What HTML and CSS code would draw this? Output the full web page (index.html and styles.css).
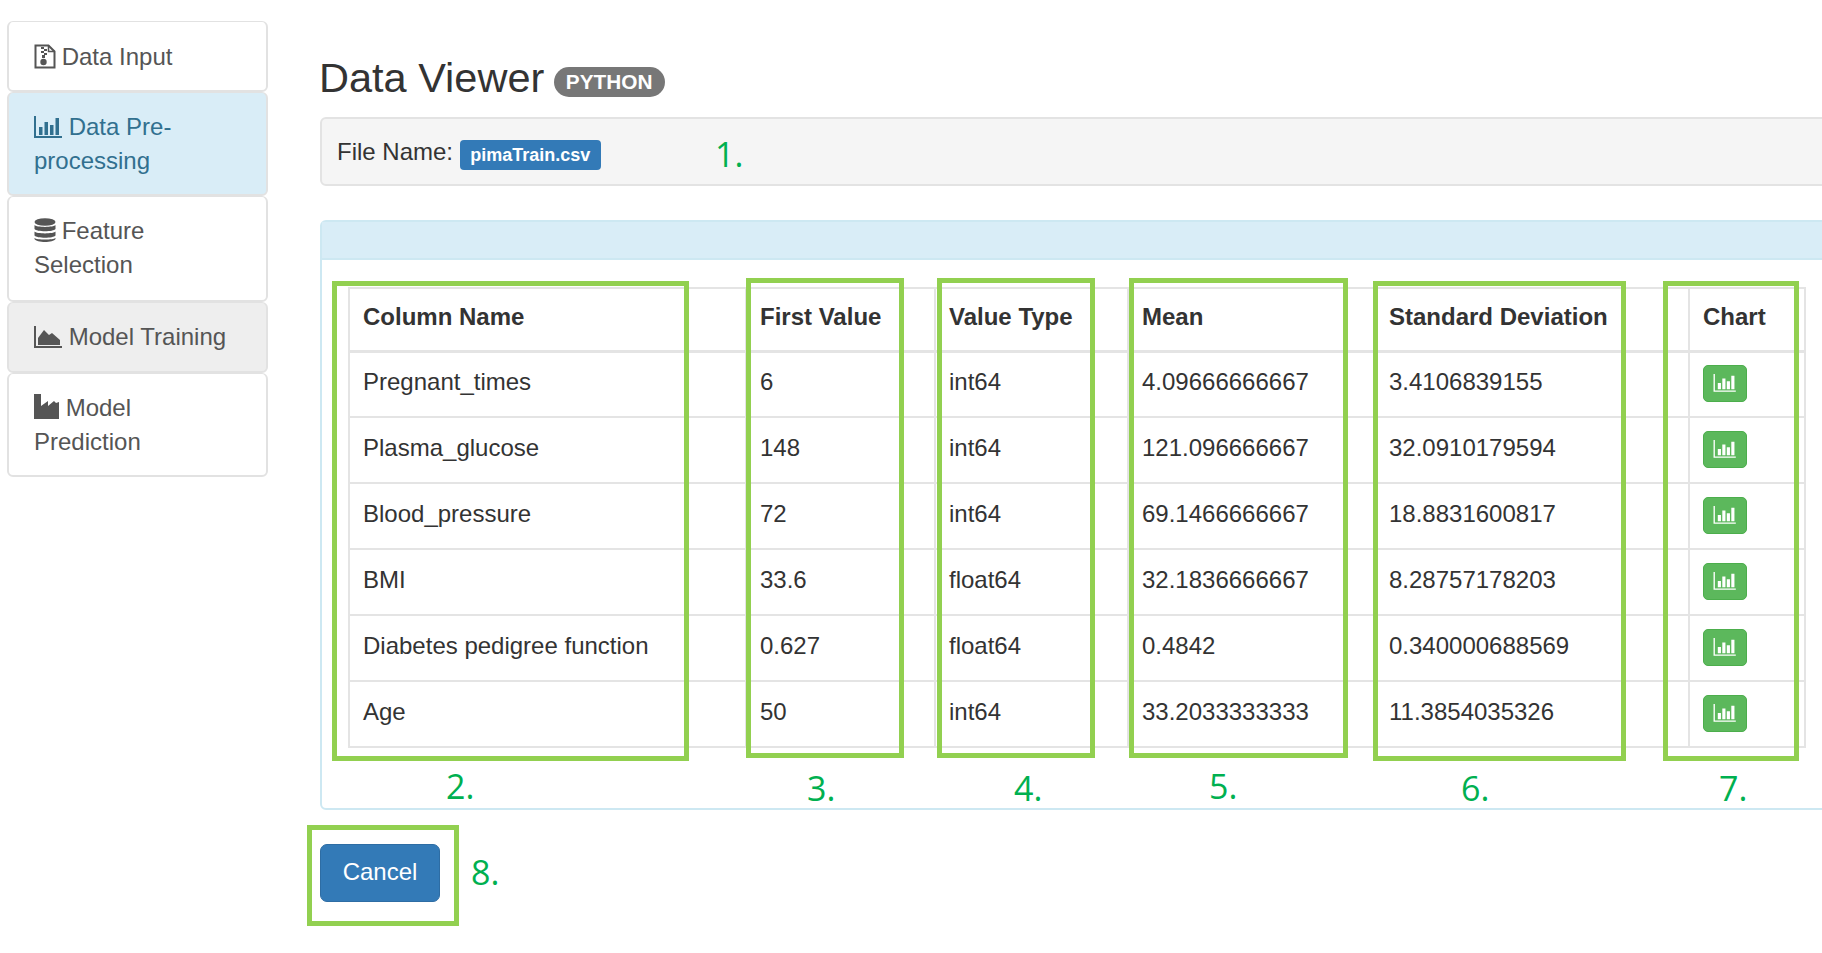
FILE: index.html
```html
<!DOCTYPE html>
<html lang="en">
<head>
  <meta charset="UTF-8" />
  <title>Data Viewer</title>
  <link rel="stylesheet" href="styles.css">
</head>
<body>

  <div class="page">

    <!-- Side Menu -->
    <nav class="menu">
      <a class="menu-item">
        <svg class="ico ico-tight" viewBox="0 0 22 25" width="22" height="25"><path d="M1.500 1.500h13l6 6v16h-19z" fill="none" stroke="#555" stroke-width="2"/><path d="M14.500 1.500v6h6" fill="none" stroke="#555" stroke-width="1.500"/><path d="M7 3h3v2h-3zM10 5h3v2h-3zM7 7h3v2h-3zM10 9h3v2h-3zM8 11h3v3h-3z" fill="#555"/><circle cx="9.500" cy="18" r="3.200" fill="#555"/></svg>
        Data Input
      </a>
      <a class="menu-item active">
        <svg class="ico" viewBox="0 0 28 22" width="28" height="22"><path d="M1 0v21h27" fill="none" stroke="currentColor" stroke-width="2"/><path d="M5 11h3.500v8h-3.500zM10.500 6h3.500v13h-3.500zM16 9h3.500v10h-3.500zM21.500 2h3.500v17h-3.500z" fill="currentColor"/></svg>
        Data Pre-processing
      </a>
      <a class="menu-item tall">
        <svg class="ico ico-tight" viewBox="0 0 22 25" width="22" height="25"><ellipse cx="11" cy="4" rx="10.500" ry="3.800" fill="#555"/><path d="M.5 7c2 2.500 19 2.500 21 0v4c-2 3-19 3-21 0zM.5 13.500c2 2.500 19 2.500 21 0v4c-2 3-19 3-21 0zM.5 20c2 2 19 2 21 0v1c-2 4-19 4-21 0z" fill="#555"/></svg>
        Feature Selection
      </a>
      <a class="menu-item hover">
        <svg class="ico" viewBox="0 0 28 22" width="28" height="22"><path d="M1 0v21h27" fill="none" stroke="#555" stroke-width="2"/><path d="M4 19v-7l6-8 5 5 3-2 8 7v5z" fill="#555"/></svg>
        Model Training
      </a>
      <a class="menu-item">
        <svg class="ico" viewBox="0 0 25 25" width="25" height="25"><path d="M0 0h7v12l7-5v5l6-5 2 2 3-1v17h-25z" fill="#555"/></svg>
        Model Prediction
      </a>
    </nav>

    <!-- Main Content -->
    <main class="content">
      <h2 class="title">Data Viewer <span class="pill">PYTHON</span></h2>

      <div class="well">File Name: <span class="tag">pimaTrain.csv</span></div>

      <div class="panel">
        <div class="panel-head"></div>
        <div class="panel-body">
          <table class="grid">
            <colgroup>
              <col class="c1"><col class="c2"><col class="c3"><col class="c4"><col class="c5"><col class="c6">
            </colgroup>
            <thead>
              <tr><th>Column Name</th><th>First Value</th><th>Value Type</th><th>Mean</th><th>Standard Deviation</th><th>Chart</th></tr>
            </thead>
            <tbody>
              <tr><td>Pregnant_times</td><td>6</td><td>int64</td><td>4.09666666667</td><td>3.4106839155</td><td><button class="chart-btn"><svg viewBox="0 0 26 20" width="24" height="18"><path d="M1 0v19h24" fill="none" stroke="#fff" stroke-width="1.500"/><path d="M5 10h3.500v7h-3.500zM10 5h3.500v12h-3.500zM15 8h3.500v9h-3.500zM20 2h3.500v15h-3.500z" fill="#fff"/></svg></button></td></tr>
              <tr><td>Plasma_glucose</td><td>148</td><td>int64</td><td>121.096666667</td><td>32.0910179594</td><td><button class="chart-btn"><svg viewBox="0 0 26 20" width="24" height="18"><path d="M1 0v19h24" fill="none" stroke="#fff" stroke-width="1.500"/><path d="M5 10h3.500v7h-3.500zM10 5h3.500v12h-3.500zM15 8h3.500v9h-3.500zM20 2h3.500v15h-3.500z" fill="#fff"/></svg></button></td></tr>
              <tr><td>Blood_pressure</td><td>72</td><td>int64</td><td>69.1466666667</td><td>18.8831600817</td><td><button class="chart-btn"><svg viewBox="0 0 26 20" width="24" height="18"><path d="M1 0v19h24" fill="none" stroke="#fff" stroke-width="1.500"/><path d="M5 10h3.500v7h-3.500zM10 5h3.500v12h-3.500zM15 8h3.500v9h-3.500zM20 2h3.500v15h-3.500z" fill="#fff"/></svg></button></td></tr>
              <tr><td>BMI</td><td>33.6</td><td>float64</td><td>32.1836666667</td><td>8.28757178203</td><td><button class="chart-btn"><svg viewBox="0 0 26 20" width="24" height="18"><path d="M1 0v19h24" fill="none" stroke="#fff" stroke-width="1.500"/><path d="M5 10h3.500v7h-3.500zM10 5h3.500v12h-3.500zM15 8h3.500v9h-3.500zM20 2h3.500v15h-3.500z" fill="#fff"/></svg></button></td></tr>
              <tr><td>Diabetes pedigree function</td><td>0.627</td><td>float64</td><td>0.4842</td><td>0.340000688569</td><td><button class="chart-btn"><svg viewBox="0 0 26 20" width="24" height="18"><path d="M1 0v19h24" fill="none" stroke="#fff" stroke-width="1.500"/><path d="M5 10h3.500v7h-3.500zM10 5h3.500v12h-3.500zM15 8h3.500v9h-3.500zM20 2h3.500v15h-3.500z" fill="#fff"/></svg></button></td></tr>
              <tr><td>Age</td><td>50</td><td>int64</td><td>33.2033333333</td><td>11.3854035326</td><td><button class="chart-btn"><svg viewBox="0 0 26 20" width="24" height="18"><path d="M1 0v19h24" fill="none" stroke="#fff" stroke-width="1.500"/><path d="M5 10h3.500v7h-3.500zM10 5h3.500v12h-3.500zM15 8h3.500v9h-3.500zM20 2h3.500v15h-3.500z" fill="#fff"/></svg></button></td></tr>
            </tbody>
          </table>
        </div>
      </div>

      <button class="cancel">Cancel</button>
    </main>
  </div>

  <!-- Annotations drawn over the screenshot -->
  <div class="box b2"></div>
  <div class="box b3"></div>
  <div class="box b4"></div>
  <div class="box b5"></div>
  <div class="box b6"></div>
  <div class="box b7"></div>
  <div class="box b8"></div>

  <span class="num n1">1.</span>
  <span class="num n2">2.</span>
  <span class="num n3">3.</span>
  <span class="num n4">4.</span>
  <span class="num n5">5.</span>
  <span class="num n6">6.</span>
  <span class="num n7">7.</span>
  <span class="num n8">8.</span>

</body>
</html>
```

FILE: styles.css
```css
html, body {
  margin: 0;
  padding: 0;
  width: 1822px;
  height: 953px;
  overflow: hidden;
  background-color: #fff;
}

body {
  position: relative;
  font-family: "Liberation Sans", Arial, sans-serif;
  font-size: 24px;
  color: #333;
}

.page {
  display: flex;
  align-items: flex-start;
  padding: 21px 0 0 7px;
  width: 1815px;
  overflow: hidden;
}

/* Side Menu */
.menu {
  width: 261px;
  flex: none;
  display: flex;
  flex-direction: column;
}

.menu-item {
  box-sizing: border-box;
  height: 71px;
  padding: 17px 25px 0;
  line-height: 33.500px;
  border: 2px solid #e2e2e2;
  border-top-width: 1px;
  border-radius: 6px;
  background-color: #fff;
  color: #555;
}

.menu-item:first-child {
  padding-top: 18px;
}

.menu-item:nth-child(2),
.menu-item:nth-child(5) {
  height: 104px;
}

.menu-item.tall {
  height: 106px;
}

.menu-item.active {
  background-color: #d9edf7;
  color: #31708f;
}

.menu-item.hover {
  background-color: #eee;
}

.ico {
  vertical-align: -3px;
}

.ico-tight {
  margin-right: -1px;
  vertical-align: -4px;
}

/* Main Content */
.content {
  flex: none;
  width: 1600px;
  margin-left: 52px;
  padding-top: 33px;
}

.title {
  margin: 0 0 15px;
  font-size: 41.500px;
  font-weight: normal;
  line-height: 48px;
  margin-left: -1px;
}

.pill {
  display: inline-block;
  vertical-align: 3px;
  padding: 0 12px;
  margin-left: -2px;
  font-size: 20.800px;
  font-weight: bold;
  line-height: 30px;
  color: #fff;
  background-color: #777;
  border-radius: 16px;
}

.well {
  box-sizing: border-box;
  height: 69px;
  padding: 17px 15px 0;
  line-height: 32px;
  background-color: #f5f5f5;
  border: 2px solid #e3e3e3;
  border-radius: 6px;
  margin-bottom: 34px;
}

.tag {
  display: inline-block;
  vertical-align: -1px;
  padding: 0 10.500px;
  font-size: 18px;
  font-weight: bold;
  line-height: 30px;
  color: #fff;
  background-color: #337ab7;
  border-radius: 4px;
}

.panel {
  box-sizing: border-box;
  height: 590px;
  border: 2px solid #cde8f2;
  border-radius: 6px;
  margin-bottom: 34px;
}

.panel-head {
  height: 36px;
  background-color: #d9edf7;
  border-bottom: 2px solid #cde8f2;
}

.panel-body {
  padding: 27px 0 0 26px;
}

.grid {
  border-collapse: collapse;
  table-layout: fixed;
  width: 1456px;
}

.c1 { width: 397px; }
.c2 { width: 189px; }
.c3 { width: 193px; }
.c4 { width: 247px; }
.c5 { width: 314px; }
.c6 { width: 116px; }

.grid th,
.grid td {
  height: 66px;
  padding: 0 13px 4px;
  text-align: left;
  white-space: nowrap;
  border: 2px solid #e4e4e4;
  box-sizing: border-box;
}

.grid th {
  height: 63px;
  font-weight: bold;
  border-bottom-width: 3px;
}

.grid td:last-child {
  padding-bottom: 0;
}

.chart-btn {
  display: block;
  width: 44px;
  height: 37px;
  padding: 0;
  background-color: #5cb85c;
  border: 1px solid #4cae4c;
  border-radius: 5px;
  position: relative;
  top: -1px;
}

.chart-btn svg {
  display: block;
  margin: auto;
}

.cancel {
  display: block;
  width: 120px;
  height: 58px;
  padding: 0 0 2px;
  font-family: inherit;
  font-size: 24px;
  color: #fff;
  background-color: #337ab7;
  border: 1px solid #2e6da4;
  border-radius: 7px;
}

/* Annotations */
.box {
  position: absolute;
  box-sizing: border-box;
  border: 5px solid #92d050;
}

.b2 { left: 332px; top: 281px; width: 357px; height: 480px; }
.b3 { left: 746px; top: 278px; width: 158px; height: 480px; }
.b4 { left: 937px; top: 278px; width: 158px; height: 480px; }
.b5 { left: 1129px; top: 278px; width: 219px; height: 480px; }
.b6 { left: 1373px; top: 281px; width: 253px; height: 480px; }
.b7 { left: 1663px; top: 281px; width: 136px; height: 480px; }
.b8 { left: 307px; top: 825px; width: 152px; height: 101px; }

.num {
  position: absolute;
  font-family: "Open Sans", sans-serif;
  font-size: 34px;
  line-height: 40px;
  color: #00b050;
}

.n1 { left: 715px; top: 134px; }
.n2 { left: 446px; top: 766px; }
.n3 { left: 807px; top: 768px; }
.n4 { left: 1014px; top: 768px; }
.n5 { left: 1209px; top: 766px; }
.n6 { left: 1461px; top: 768px; }
.n7 { left: 1719px; top: 768px; }
.n8 { left: 471px; top: 852px; }
```
